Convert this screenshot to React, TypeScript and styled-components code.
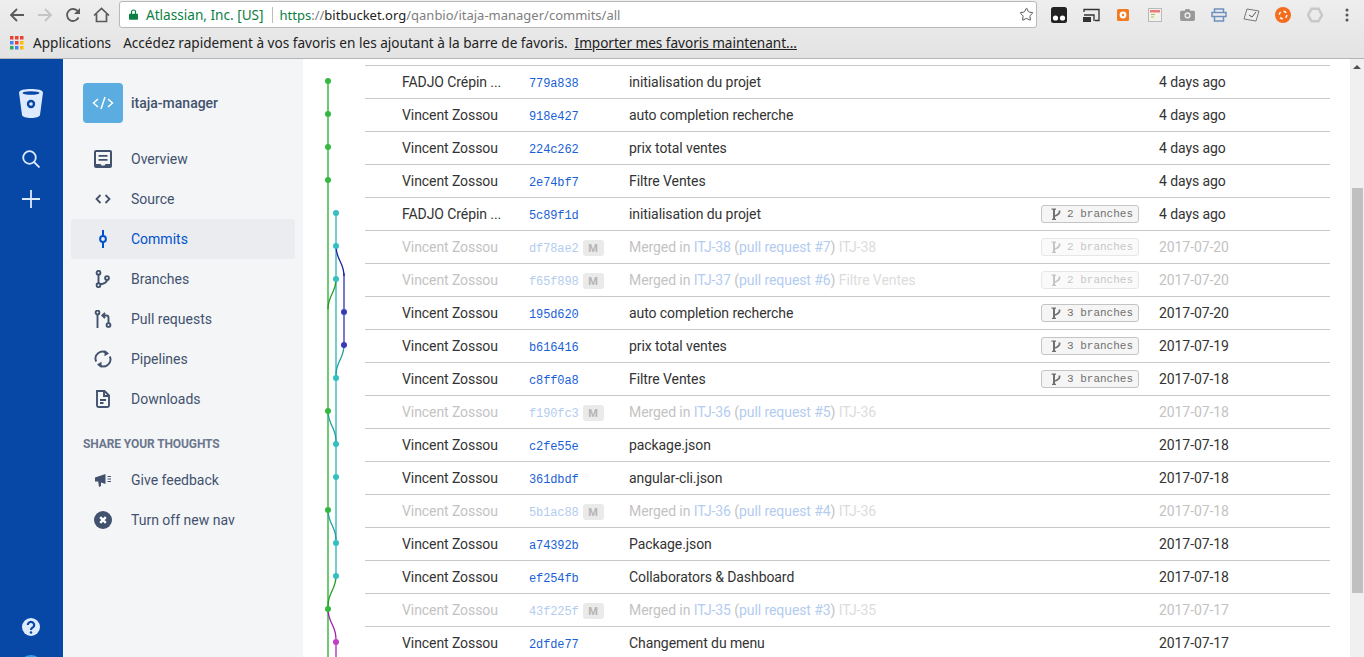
import React from 'react';
import styled, { createGlobalStyle } from 'styled-components';
import { Star } from 'lucide-react';

const GlobalStyle = createGlobalStyle`
  html, body {
    margin: 0;
    padding: 0;
    height: 657px;
    overflow: hidden;
    background: #fff;
    font-family: Roboto, "Liberation Sans", sans-serif;
  }
`;

const Page = styled.div`
  width: 1364px;
  height: 657px;
  display: flex;
  flex-direction: column;
  overflow: hidden;
`;

/* browser chrome */
const Chrome = styled.header`
  height: 59px;
  flex: none;
  box-sizing: border-box;
  border-bottom: 1px solid #b4b4b4;
  background: linear-gradient(#eeeeee, #e3e3e3);
  display: flex;
  flex-direction: column;
  font-family: "Noto Sans", "Open Sans", sans-serif;
`;

const Toolbar = styled.div`
  height: 29px;
  display: flex;
  align-items: center;
  padding-left: 3px;
`;

const NavButton = styled.span`
  width: 28px;
  height: 20px;
  display: flex;
  align-items: center;
  justify-content: center;
  flex: none;
`;

const Omnibox = styled.div`
  width: 918px;
  height: 27px;
  margin-left: 4px;
  box-sizing: border-box;
  background: #fff;
  border: 1px solid #b9b9b9;
  border-radius: 3px;
  display: flex;
  align-items: center;
  padding-left: 9px;
  font-size: 13px;
  white-space: nowrap;
  flex: none;
  position: relative;
`;

const Secure = styled.span`
  color: #0b8043;
  font-size: 13.6px;
  margin-left: 8px;
`;

const Divider = styled.span`
  width: 1px;
  height: 16px;
  background: #bdbdbd;
  margin: 0 7px 0 8px;
`;

const UrlHost = styled.span`
  color: #222;
`;

const UrlDim = styled.span`
  color: #808080;
`;

const UrlScheme = styled.span`
  color: #0b8043;
`;

const StarSlot = styled.span`
  position: absolute;
  right: 2px;
  top: 5px;
  display: flex;
  color: #555;
`;

const Extensions = styled.div`
  display: flex;
  align-items: center;
  margin-left: 6px;
`;

const ExtSlot = styled.span`
  width: 32px;
  height: 22px;
  display: flex;
  align-items: center;
  justify-content: center;
  flex: none;
`;

const Bookmarks = styled.div`
  height: 29px;
  padding: 0 0 2px 10px;
  box-sizing: border-box;
  display: flex;
  align-items: center;
  font-size: 13.6px;
  color: #222;
  white-space: pre;
`;

const AppsLabel = styled.span`
  margin: 0 12px 0 9px;
`;

const ImportLink = styled.span`
  text-decoration: underline;
  margin-left: 7px;
  letter-spacing: -0.03px;
`;

const Main = styled.div`
  flex: 1;
  display: flex;
  min-height: 0;
`;

/* global rail */
const Rail = styled.nav`
  width: 63px;
  flex: none;
  background: #0747a6;
  display: flex;
  flex-direction: column;
  align-items: center;
  padding: 29px 1px 0 0;
  box-sizing: border-box;
  overflow: hidden;
`;

const RailButton = styled.span`
  width: 24px;
  height: 24px;
  display: flex;
  align-items: center;
  justify-content: center;
  margin-bottom: 16px;
`;

const RailLogo = styled(RailButton)`
  height: 30px;
  margin-bottom: 29px;
`;

const RailBottom = styled.div`
  margin-top: auto;
  display: flex;
  flex-direction: column;
  align-items: center;
  gap: 19px;
  margin-bottom: -22px;
`;

const Avatar = styled.span`
  width: 24px;
  height: 24px;
  border-radius: 50%;
  background: #2e9fe6;
`;

/* project sidebar */
const Side = styled.aside`
  width: 240px;
  flex: none;
  background: #f4f5f7;
  box-sizing: border-box;
  padding: 24px 8px 0;
  color: #42526e;
`;

const Repo = styled.div`
  display: flex;
  align-items: center;
  gap: 8px;
  padding-left: 12px;
  margin-bottom: 16px;
  font-size: 14px;
  font-weight: 500;
`;

const RepoIcon = styled.span`
  width: 40px;
  height: 40px;
  border-radius: 4px;
  background: #5aace1;
  display: flex;
  align-items: center;
  justify-content: center;
`;

const NavItem = styled.div<{ $active?: boolean }>`
  height: 40px;
  display: flex;
  align-items: center;
  border-radius: 3px;
  font-size: 14px;
  background: ${p => (p.$active ? '#ebecf0' : 'transparent')};
  color: ${p => (p.$active ? '#0052cc' : '#42526e')};
`;

const NavIcon = styled.span`
  width: 60px;
  display: flex;
  justify-content: center;
  padding-left: 4px;
  box-sizing: border-box;
`;

const SectionTitle = styled.div`
  font-size: 12px;
  font-weight: 700;
  letter-spacing: -0.1px;
  color: #6b778c;
  padding-left: 12px;
  margin: 17px 0 8px;
  line-height: 16px;
`;

/* commits */
const Content = styled.main`
  flex: 1;
  position: relative;
  overflow: hidden;
  padding: 6px 0 0 62px;
`;

const Graph = styled.svg`
  position: absolute;
  left: 0;
  top: 0;
`;

const Row = styled.div<{ $merge?: boolean }>`
  width: 965px;
  height: 33px;
  box-sizing: border-box;
  border-top: 1px solid #c9c9c9;
  display: flex;
  align-items: center;
  font-size: 14px;
  letter-spacing: -0.08px;
  color: ${p => (p.$merge ? '#c3c3c3' : '#333')};
`;

const Author = styled.span`
  width: 164px;
  padding-left: 37px;
  box-sizing: border-box;
  flex: none;
  white-space: nowrap;
`;

const Hash = styled.span<{ $merge?: boolean }>`
  width: 100px;
  flex: none;
  display: flex;
  align-items: center;
  font-family: "Liberation Mono", monospace;
  font-size: 12px;
  letter-spacing: -0.12px;
  padding-top: 3px;
  color: ${p => (p.$merge ? '#b3ccf0' : '#1a5fd6')};
`;

const MergeTag = styled.span`
  width: 21px;
  height: 16px;
  margin: -1px 0 0 4px;
  border-radius: 3px;
  background: #eaeaea;
  color: #b5b5b5;
  font: 700 11px Roboto, sans-serif;
  display: flex;
  align-items: center;
  justify-content: center;
`;

const Message = styled.span`
  width: 412px;
  flex: none;
  white-space: nowrap;
`;

const IssueLink = styled.span`
  color: #b3ccf0;
`;

const MergeTitle = styled.span`
  color: #dcdcdc;
`;

const BranchCell = styled.span`
  width: 118px;
  flex: none;
`;

const BranchTag = styled.span<{ $merge?: boolean }>`
  width: 98px;
  height: 18px;
  box-sizing: border-box;
  display: flex;
  align-items: center;
  gap: 6px;
  padding: 0 0 1px 9px;
  border: 1px solid #c4c4c4;
  border-radius: 3px;
  background: #f5f5f5;
  color: #707070;
  font-family: "Liberation Mono", monospace;
  font-size: 11px;
  letter-spacing: 0;
  opacity: ${p => (p.$merge ? 0.4 : 1)};
`;

const BranchGlyph = styled.svg`
  flex: none;
`;

const Scrollbar = styled.div`
  position: absolute;
  right: 0;
  top: 0;
  bottom: 0;
  width: 14px;
  background: #f0f0f0;
`;

const ScrollUp = styled.span`
  display: block;
  margin: 6px auto 0;
  width: 0;
  height: 0;
  border-left: 4px solid transparent;
  border-right: 4px solid transparent;
  border-bottom: 4px solid #505050;
`;

const ScrollThumb = styled.div`
  position: absolute;
  left: 2px;
  right: 1px;
  top: 129px;
  height: 405px;
  background: #c0c0c0;
`;

interface Commit {
  author: string;
  hash: string;
  message: React.ReactNode;
  branches?: number;
  date: string;
  merge?: boolean;
}

const merged = (issue: string, pr: number, title: string) => (
  <>
    Merged in <IssueLink>{issue}</IssueLink> (<IssueLink>pull request #{pr}</IssueLink>) <MergeTitle>{title}</MergeTitle>
  </>
);

const VZ = 'Vincent Zossou';

const commits: Commit[] = [
  { author: 'FADJO Crépin ...', hash: '779a838', message: 'initialisation du projet', date: '4 days ago' },
  { author: VZ, hash: '918e427', message: 'auto completion recherche', date: '4 days ago' },
  { author: VZ, hash: '224c262', message: 'prix total ventes', date: '4 days ago' },
  { author: VZ, hash: '2e74bf7', message: 'Filtre Ventes', date: '4 days ago' },
  { author: 'FADJO Crépin ...', hash: '5c89f1d', message: 'initialisation du projet', branches: 2, date: '4 days ago' },
  { author: VZ, hash: 'df78ae2', message: merged('ITJ-38', 7, 'ITJ-38'), branches: 2, date: '2017-07-20', merge: true },
  { author: VZ, hash: 'f65f898', message: merged('ITJ-37', 6, 'Filtre Ventes'), branches: 2, date: '2017-07-20', merge: true },
  { author: VZ, hash: '195d620', message: 'auto completion recherche', branches: 3, date: '2017-07-20' },
  { author: VZ, hash: 'b616416', message: 'prix total ventes', branches: 3, date: '2017-07-19' },
  { author: VZ, hash: 'c8ff0a8', message: 'Filtre Ventes', branches: 3, date: '2017-07-18' },
  { author: VZ, hash: 'f190fc3', message: merged('ITJ-36', 5, 'ITJ-36'), date: '2017-07-18', merge: true },
  { author: VZ, hash: 'c2fe55e', message: 'package.json', date: '2017-07-18' },
  { author: VZ, hash: '361dbdf', message: 'angular-cli.json', date: '2017-07-18' },
  { author: VZ, hash: '5b1ac88', message: merged('ITJ-36', 4, 'ITJ-36'), date: '2017-07-18', merge: true },
  { author: VZ, hash: 'a74392b', message: 'Package.json', date: '2017-07-18' },
  { author: VZ, hash: 'ef254fb', message: 'Collaborators & Dashboard', date: '2017-07-18' },
  { author: VZ, hash: '43f225f', message: merged('ITJ-35', 3, 'ITJ-35'), date: '2017-07-17', merge: true },
  { author: VZ, hash: '2dfde77', message: 'Changement du menu', date: '2017-07-17' },
];

const GREEN = '#33b93f';
const TEAL = '#36bfc0';
const INDIGO = '#3b3bb8';
const PURPLE = '#bf3fc4';

// x of the three lanes, y of a row inside the content area (which starts at y=59)
const L1 = 25;
const L2 = 33;
const L3 = 41;
const rowY = (i: number) => 22 + i * 33;

const curve = (x1: number, i1: number, x2: number, i2: number) => {
  const y1 = rowY(i1);
  const y2 = rowY(i2) - 3;
  return `M${x1} ${y1}C${x1} ${y1 + 14} ${x2} ${y2 - 14} ${x2} ${y2}`;
};

const dots: [number, number, string][] = [
  [L1, 0, GREEN], [L1, 1, GREEN], [L1, 2, GREEN], [L1, 3, GREEN],
  [L2, 4, TEAL], [L2, 5, TEAL], [L2, 6, TEAL],
  [L3, 7, INDIGO], [L3, 8, INDIGO], [L2, 9, TEAL],
  [L1, 10, GREEN], [L2, 11, TEAL], [L2, 12, TEAL],
  [L1, 13, GREEN], [L2, 14, TEAL], [L2, 15, TEAL],
  [L1, 16, GREEN], [L2, 17, PURPLE],
];

const CommitGraph = () => (
  <Graph width="60" height="598" fill="none">
    <path d={`M${L1} ${rowY(0)}V598`} stroke="#6fcb73" strokeWidth="2" />
    <path d={`M${L2} ${rowY(4)}V${rowY(15)}`} stroke="#70cfcf" strokeWidth="2" />
    <path d={`M${L3} ${rowY(6) - 6}V${rowY(8)}`} stroke="#7878cf" strokeWidth="2" />
    <path d={`M${L2} ${rowY(17)}V598`} stroke="#cc70d2" strokeWidth="2" />
    <path d={curve(L2, 5, L3, 6)} stroke="#20209c" strokeWidth="1.3" />
    <path d={curve(L2, 6, L1, 7)} stroke="#229c22" strokeWidth="1.3" />
    <path d={curve(L3, 8, L2, 9)} stroke="#1f9f9f" strokeWidth="1.3" />
    <path d={curve(L1, 10, L2, 11)} stroke="#1f9f9f" strokeWidth="1.3" />
    <path d={curve(L1, 13, L2, 14)} stroke="#1f9f9f" strokeWidth="1.3" />
    <path d={curve(L2, 15, L1, 16)} stroke="#229c22" strokeWidth="1.3" />
    <path d={curve(L1, 16, L2, 17)} stroke="#a020a8" strokeWidth="1.3" />
    {dots.map(([x, i, c]) => (
      <circle key={i} cx={x} cy={rowY(i)} r="3" fill={c} />
    ))}
  </Graph>
);

const BranchIcon = () => (
  <BranchGlyph width="10" height="12" viewBox="0 0 10 12" fill="none" stroke="currentColor">
    <path strokeWidth="2" d="M3 1v10.500" />
    <path strokeWidth="1.3" d="M.5 1.200h4.500M1 11.300h4" />
    <path strokeWidth="1.8" d="M8.500 2.500v1.500c0 2-2 3-4.500 4" />
  </BranchGlyph>
);

const AppsGrid = () => {
  const colors = ['#ea4335', '#ea4335', '#ea4335', '#4285f4', '#ea4335', '#fbbc05', '#34a853', '#4285f4', '#fbbc05'];
  return (
    <svg width="14" height="14" viewBox="0 0 14 14">
      {colors.map((c, i) => (
        <rect key={i} x={(i % 3) * 5} y={Math.floor(i / 3) * 5} width="3.5" height="3.5" fill={c} />
      ))}
    </svg>
  );
};

const navIcons = {
  overview: (
    <svg width="18" height="18" viewBox="0 0 18 18">
      <path fill="#42526e" fillRule="evenodd" d="M2 0h14a2 2 0 0 1 2 2v14a2 2 0 0 1-2 2H2a2 2 0 0 1-2-2V2a2 2 0 0 1 2-2zm0 2v12h4.500l1 1.600h3l1-1.600H16V2H2z" />
      <path fill="#42526e" d="M4.500 5h9v1.800h-9zM4.500 9h9v1.800h-9z" />
    </svg>
  ),
  source: (
    <svg width="18" height="18" viewBox="0 0 18 18" fill="none" stroke="#42526e" strokeWidth="1.8">
      <path d="M6.500 5 2.500 9l4 4M11.500 5l4 4-4 4" />
    </svg>
  ),
  commits: (
    <svg width="18" height="18" viewBox="0 0 18 18" fill="none" stroke="#0052cc" strokeWidth="2">
      <path d="M9 0v5.600M9 12.400V18" />
      <circle cx="9" cy="9" r="2.9" />
    </svg>
  ),
  branches: (
    <svg width="18" height="18" viewBox="0 0 18 18" fill="none" stroke="#42526e" strokeWidth="1.9">
      <circle cx="4.500" cy="2.800" r="1.9" />
      <circle cx="4.500" cy="15.200" r="1.9" />
      <circle cx="13" cy="8" r="1.9" />
      <path d="M4.500 4.700v8.600M13 9.900c0 2.600-2.500 3.600-6.600 4.400" />
    </svg>
  ),
  pulls: (
    <svg width="18" height="18" viewBox="0 0 18 18" fill="none" stroke="#42526e" strokeWidth="1.9">
      <circle cx="3.500" cy="2.500" r="1.9" />
      <circle cx="14.500" cy="15" r="1.9" />
      <path d="M3.500 4.400V18M14.500 13V7.500c0-1.500-1-2-2-2H9M11 2.800 8.300 5.500 11 8.200" />
    </svg>
  ),
  pipelines: (
    <svg width="18" height="18" viewBox="0 0 18 18" fill="none" stroke="#42526e" strokeWidth="1.9">
      <path d="M2.200 11.500A7 7 0 0 1 13 3.200M15.800 6.500A7 7 0 0 1 5 14.800" />
      <path fill="#42526e" stroke="none" d="M10.500 0v6.200L15 3.400zM7.500 18v-6.200L3 14.600z" />
    </svg>
  ),
  downloads: (
    <svg width="18" height="18" viewBox="0 0 18 18" fill="none" stroke="#42526e" strokeWidth="1.9">
      <path d="M3 1h7.500L15 5.500V15.500a1.500 1.500 0 0 1-1.500 1.500h-9A1.500 1.500 0 0 1 3 15.500z" />
      <path d="M10 1v5h5M6 10h6M6 13h3.500" />
    </svg>
  ),
  feedback: (
    <svg width="18" height="18" viewBox="0 0 18 18">
      <path fill="#42526e" d="M1 6.500 11.500 3v10L7 11.500V15l-2 1-.8-5.600H1z" />
      <path fill="none" stroke="#42526e" strokeWidth="1" d="M13.500 5.500H17M13.500 8H17M13.500 10.500H17" />
    </svg>
  ),
  off: (
    <svg width="18" height="18" viewBox="0 0 18 18">
      <circle cx="9" cy="9" r="9" fill="#42526e" />
      <path stroke="#fff" strokeWidth="2.4" d="M6.200 6.200l5.600 5.600M11.800 6.200l-5.600 5.600" />
    </svg>
  ),
};

const navItems: { label: string; icon: React.ReactNode; active?: boolean }[] = [
  { label: 'Overview', icon: navIcons.overview },
  { label: 'Source', icon: navIcons.source },
  { label: 'Commits', icon: navIcons.commits, active: true },
  { label: 'Branches', icon: navIcons.branches },
  { label: 'Pull requests', icon: navIcons.pulls },
  { label: 'Pipelines', icon: navIcons.pipelines },
  { label: 'Downloads', icon: navIcons.downloads },
];

const extensions = [
  <svg width="16" height="16" viewBox="0 0 16 16"><rect width="16" height="16" rx="2.5" fill="#222" /><circle cx="4.500" cy="11" r="2.6" fill="#fff" /><circle cx="11.500" cy="11" r="2.6" fill="#fff" /></svg>,
  <svg width="17" height="14" viewBox="0 0 17 14" fill="none" stroke="#333" strokeWidth="1.3"><path d="M1 4V1.500h15v11h-4" /><path d="M1 7h10v6" /><path fill="#333" stroke="none" d="M0 9h8v5H0z" /></svg>,
  <svg width="12" height="12" viewBox="0 0 12 12"><rect width="12" height="12" rx="1.5" fill="#f47b20" /><circle cx="6" cy="6" r="3.4" fill="#fff" /><circle cx="6" cy="6" r="1.2" fill="#f47b20" /></svg>,
  <svg width="14" height="14" viewBox="0 0 14 14"><rect x=".5" y=".5" width="13" height="13" fill="#f4f1ea" stroke="#b9b9b9" /><path fill="#ee7b7b" d="M2 2h10v2.500H2z" /><path fill="#9acb5a" d="M3 6h4v1H3zM3 8.500h3v1H3z" /></svg>,
  <svg width="15" height="13" viewBox="0 0 16 14"><path fill="#999" d="M1.500 3H5l1-2h4l1 2h3.500A1.500 1.500 0 0 1 16 4.500v8a1.500 1.500 0 0 1-1.500 1.500h-13A1.500 1.500 0 0 1 0 12.500v-8A1.500 1.500 0 0 1 1.500 3z" /><circle cx="8" cy="8" r="3.3" fill="#eee" /><circle cx="8" cy="8" r="1.8" fill="#999" /></svg>,
  <svg width="16" height="14" viewBox="0 0 16 14" fill="none" stroke="#6d8fbe" strokeWidth="1.5"><path d="M3.500 4V1h9v3M1 4.500h14v4H1zM3.500 8.500V13h9V8.500" /></svg>,
  <svg width="17" height="14" viewBox="0 0 17 14"><path fill="#eee" stroke="#777" d="M4 1l12 2-3 10L1 11z" /><path fill="none" stroke="#555" d="M6 7l3 2 4-5" /></svg>,
  <svg width="16" height="16" viewBox="0 0 16 16"><circle cx="8" cy="8" r="8" fill="#f46d1f" /><circle cx="8" cy="8" r="3.8" fill="none" stroke="#fff" strokeWidth="1.5" strokeDasharray="3 3" /></svg>,
  <svg width="16" height="16" viewBox="0 0 16 16"><path fill="none" stroke="#c8c8c8" strokeWidth="2.5" d="M4.500 1.800h7L15 8l-3.500 6.200h-7L1 8z" /></svg>,
  <svg width="4" height="14" viewBox="0 0 4 14"><g fill="#555"><circle cx="2" cy="2" r="1.5" /><circle cx="2" cy="7" r="1.5" /><circle cx="2" cy="12" r="1.5" /></g></svg>,
];

const App = () => (
  <Page>
    <GlobalStyle />
    <Chrome>
      <Toolbar>
        <NavButton>
          <svg width="16" height="16" viewBox="0 0 16 16" fill="none" stroke="#5a5a5a" strokeWidth="1.8"><path d="M15 8H2M8 2 2 8l6 6" /></svg>
        </NavButton>
        <NavButton>
          <svg width="16" height="16" viewBox="0 0 16 16" fill="none" stroke="#c4c4c4" strokeWidth="1.8"><path d="M1 8h13M8 2l6 6-6 6" /></svg>
        </NavButton>
        <NavButton>
          <svg width="16" height="16" viewBox="0 0 16 16" fill="none" stroke="#5a5a5a" strokeWidth="1.8"><path d="M13.500 10.500A6 6 0 1 1 12.800 4.300" /><path fill="#5a5a5a" stroke="none" d="M15 1v6H9z" /></svg>
        </NavButton>
        <NavButton>
          <svg width="17" height="16" viewBox="0 0 17 16" fill="none" stroke="#5a5a5a" strokeWidth="1.7"><path d="M1 8.500 8.500 1.500 16 8.500M3.500 7v7.500h10V7" /></svg>
        </NavButton>
        <Omnibox>
          <svg width="9" height="11" viewBox="0 0 11 13"><path fill="#0b8043" d="M1 5.500h9a1 1 0 0 1 1 1V12a1 1 0 0 1-1 1H1a1 1 0 0 1-1-1V6.500a1 1 0 0 1 1-1z" /><path fill="none" stroke="#0b8043" strokeWidth="1.4" d="M3 6V3.500a2.500 2.500 0 0 1 5 0V6" /></svg>
          <Secure>Atlassian, Inc. [US]</Secure>
          <Divider />
          <UrlScheme>https</UrlScheme><UrlDim>://</UrlDim><UrlHost>bitbucket.org</UrlHost><UrlDim>/qanbio/itaja-manager/commits/all</UrlDim>
          <StarSlot><Star size={15} strokeWidth={1.6} /></StarSlot>
        </Omnibox>
        <Extensions>
          {extensions.map((icon, i) => (
            <ExtSlot key={i}>{icon}</ExtSlot>
          ))}
        </Extensions>
      </Toolbar>
      <Bookmarks>
        <AppsGrid />
        <AppsLabel>Applications</AppsLabel>
        Accédez rapidement à vos favoris en les ajoutant à la barre de favoris.
        <ImportLink>Importer mes favoris maintenant...</ImportLink>
      </Bookmarks>
    </Chrome>
    <Main>
      <Rail>
        <RailLogo>
          <svg width="24" height="29" viewBox="0 0 24 29">
            <path fill="#deebff" d="M0 3.500C0 1 6 0 12 0s12 1 12 3.500L21 26c-.3 2-4.500 3-9 3s-8.700-1-9-3z" />
            <ellipse cx="12" cy="4" rx="8.500" ry="1.800" fill="#0747a6" />
            <circle cx="12" cy="15" r="4.200" fill="#0747a6" />
            <circle cx="12" cy="15" r="1.800" fill="#deebff" />
          </svg>
        </RailLogo>
        <RailButton>
          <svg width="18" height="18" viewBox="0 0 18 18" fill="none" stroke="#deebff" strokeWidth="1.8"><circle cx="7.500" cy="7.500" r="6.300" /><path d="m12 12 5.500 5.500" /></svg>
        </RailButton>
        <RailButton>
          <svg width="18" height="18" viewBox="0 0 18 18" fill="none" stroke="#deebff" strokeWidth="1.8"><path d="M9 0v18M0 9h18" /></svg>
        </RailButton>
        <RailBottom>
          <svg width="18" height="18" viewBox="0 0 18 18">
            <circle cx="9" cy="9" r="9" fill="#deebff" />
            <path fill="none" stroke="#0747a6" strokeWidth="2.2" d="M5.800 7a3.200 3 0 1 1 5 2.400C9.800 10 9 10.500 9 12" />
            <circle cx="9" cy="14.500" r="1.300" fill="#0747a6" />
          </svg>
          <Avatar />
        </RailBottom>
      </Rail>
      <Side>
        <Repo>
          <RepoIcon>
            <svg width="22" height="14" viewBox="0 0 22 14" fill="none" stroke="#fff" strokeWidth="1.5"><path d="M6 3 1.500 7 6 11M16 3l4.500 4-4.500 4M13 1 9 13" /></svg>
          </RepoIcon>
          itaja-manager
        </Repo>
        {navItems.map(item => (
          <NavItem key={item.label} $active={item.active}>
            <NavIcon>{item.icon}</NavIcon>
            {item.label}
          </NavItem>
        ))}
        <SectionTitle>SHARE YOUR THOUGHTS</SectionTitle>
        <NavItem>
          <NavIcon>{navIcons.feedback}</NavIcon>
          Give feedback
        </NavItem>
        <NavItem>
          <NavIcon>{navIcons.off}</NavIcon>
          Turn off new nav
        </NavItem>
      </Side>
      <Content>
        <CommitGraph />
        {commits.map(c => (
          <Row key={c.hash} $merge={c.merge}>
            <Author>{c.author}</Author>
            <Hash $merge={c.merge}>
              {c.hash}
              {c.merge && <MergeTag>M</MergeTag>}
            </Hash>
            <Message>{c.message}</Message>
            <BranchCell>
              {c.branches && (
                <BranchTag $merge={c.merge}>
                  <BranchIcon />
                  {c.branches} branches
                </BranchTag>
              )}
            </BranchCell>
            <span>{c.date}</span>
          </Row>
        ))}
        <Scrollbar>
          <ScrollUp />
          <ScrollThumb />
        </Scrollbar>
      </Content>
    </Main>
  </Page>
);

export default App;
